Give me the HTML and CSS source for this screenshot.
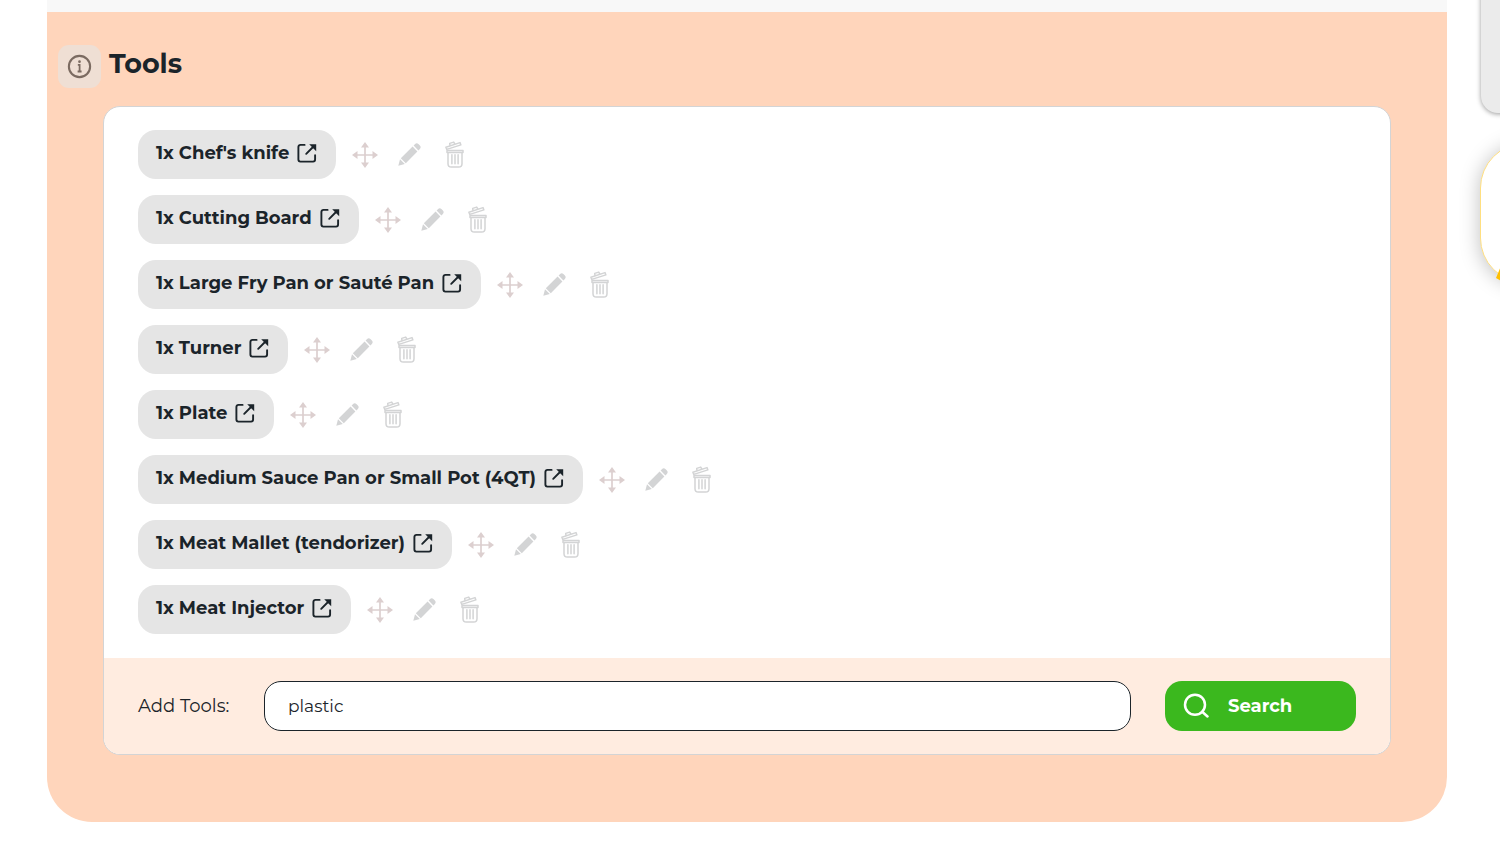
FILE: index.html
```html
<!DOCTYPE html>
<html lang="en">
<head>
  <meta charset="UTF-8">
  <meta name="viewport" content="width=device-width, initial-scale=1.0">
  <link rel="stylesheet" href="styles.css">
  <title>Tools</title>
</head>
<body>

  <!-- shared icons -->
  <svg class="icon-defs" aria-hidden="true">
    <symbol id="icon-open" viewBox="0 0 20 20">
      <path d="M7.6 1.9H3.4a2 2 0 0 0-2 2v12.7a2 2 0 0 0 2 2h12.7a2 2 0 0 0 2-2v-4.4M16.5 3.5L9.2 10.8" fill="none" stroke="#1b242a" stroke-width="1.9" stroke-linecap="round" stroke-linejoin="round"/>
      <path d="M12.2 1.2h7v7l-2-2L14.2 3.2z" fill="#1b242a"/>
    </symbol>
    <symbol id="icon-move" viewBox="0 0 26 26">
      <path d="M13 4v18M4 13h18" stroke="#dccfcf" stroke-width="1.7"/>
      <path d="M13 0l4 5.5H9zM13 26l4-5.5H9zM0 13l5.5-4v8zM26 13l-5.5-4v8z" fill="#dccfcf"/>
    </symbol>
    <symbol id="icon-edit" viewBox="0 0 23 23">
      <path d="M0.3 22.7L2 16.2L6.8 21zM2.8 15.2L14.6 3.6L19.4 8.4L7.8 20.2zM15.6 2.6l1.5-1.5q1.6-1.5 3.3 0l1.5 1.5q1.5 1.7 0 3.3l-1.5 1.5z" fill="#d3d4d5"/>
    </symbol>
    <symbol id="icon-trash" viewBox="0 0 19 27">
      <g fill="none" stroke="#d3d4d5" stroke-width="1.5" stroke-linejoin="round" stroke-linecap="round">
        <path d="M0.9 6.2L15 1.6L15.9 3.9L1.8 8.4zM5 4.6L4.7 2.4L8.7 1.1L9.8 3"/>
        <path d="M2 9.4h16v2.2H2zM3 11.7v11q0 3.3 3.3 3.3h7.4q3.3 0 3.3-3.3v-11M6.9 13.8v9M10 13.8v9M13.1 13.8v9"/>
      </g>
    </symbol>
  </svg>

  <div class="top-strip"></div>

  <section class="tools">
    <div class="tools-header">
      <button class="info-btn" type="button" aria-label="Info">
        <svg width="25" height="25" viewBox="0 0 24 24">
          <circle cx="12" cy="12" r="10.2" fill="none" stroke="#7b6b61" stroke-width="2"/>
          <path d="M10.4 10.4h1.7v6.2M10.2 16.8h3.8" fill="none" stroke="#7b6b61" stroke-width="1.7"/>
          <circle cx="12" cy="7.4" r="1.3" fill="#7b6b61"/>
        </svg>
      </button>
      <h2>Tools</h2>
    </div>

    <div class="panel">
      <ul class="tool-list">
        <li>
          <a class="pill" href="#">1x Chef's knife <svg width="20" height="20"><use href="#icon-open"/></svg></a>
          <button class="action" type="button" aria-label="Move"><svg width="26" height="26"><use href="#icon-move"/></svg></button>
          <button class="action" type="button" aria-label="Edit"><svg width="23" height="23"><use href="#icon-edit"/></svg></button>
          <button class="action" type="button" aria-label="Delete"><svg width="19" height="27"><use href="#icon-trash"/></svg></button>
        </li>
        <li>
          <a class="pill" href="#">1x Cutting Board <svg width="20" height="20"><use href="#icon-open"/></svg></a>
          <button class="action" type="button" aria-label="Move"><svg width="26" height="26"><use href="#icon-move"/></svg></button>
          <button class="action" type="button" aria-label="Edit"><svg width="23" height="23"><use href="#icon-edit"/></svg></button>
          <button class="action" type="button" aria-label="Delete"><svg width="19" height="27"><use href="#icon-trash"/></svg></button>
        </li>
        <li>
          <a class="pill" href="#">1x Large Fry Pan or Sauté Pan <svg width="20" height="20"><use href="#icon-open"/></svg></a>
          <button class="action" type="button" aria-label="Move"><svg width="26" height="26"><use href="#icon-move"/></svg></button>
          <button class="action" type="button" aria-label="Edit"><svg width="23" height="23"><use href="#icon-edit"/></svg></button>
          <button class="action" type="button" aria-label="Delete"><svg width="19" height="27"><use href="#icon-trash"/></svg></button>
        </li>
        <li>
          <a class="pill" href="#">1x Turner <svg width="20" height="20"><use href="#icon-open"/></svg></a>
          <button class="action" type="button" aria-label="Move"><svg width="26" height="26"><use href="#icon-move"/></svg></button>
          <button class="action" type="button" aria-label="Edit"><svg width="23" height="23"><use href="#icon-edit"/></svg></button>
          <button class="action" type="button" aria-label="Delete"><svg width="19" height="27"><use href="#icon-trash"/></svg></button>
        </li>
        <li>
          <a class="pill" href="#">1x Plate <svg width="20" height="20"><use href="#icon-open"/></svg></a>
          <button class="action" type="button" aria-label="Move"><svg width="26" height="26"><use href="#icon-move"/></svg></button>
          <button class="action" type="button" aria-label="Edit"><svg width="23" height="23"><use href="#icon-edit"/></svg></button>
          <button class="action" type="button" aria-label="Delete"><svg width="19" height="27"><use href="#icon-trash"/></svg></button>
        </li>
        <li>
          <a class="pill" href="#">1x Medium Sauce Pan or Small Pot (4QT) <svg width="20" height="20"><use href="#icon-open"/></svg></a>
          <button class="action" type="button" aria-label="Move"><svg width="26" height="26"><use href="#icon-move"/></svg></button>
          <button class="action" type="button" aria-label="Edit"><svg width="23" height="23"><use href="#icon-edit"/></svg></button>
          <button class="action" type="button" aria-label="Delete"><svg width="19" height="27"><use href="#icon-trash"/></svg></button>
        </li>
        <li>
          <a class="pill" href="#">1x Meat Mallet (tendorizer) <svg width="20" height="20"><use href="#icon-open"/></svg></a>
          <button class="action" type="button" aria-label="Move"><svg width="26" height="26"><use href="#icon-move"/></svg></button>
          <button class="action" type="button" aria-label="Edit"><svg width="23" height="23"><use href="#icon-edit"/></svg></button>
          <button class="action" type="button" aria-label="Delete"><svg width="19" height="27"><use href="#icon-trash"/></svg></button>
        </li>
        <li>
          <a class="pill" href="#">1x Meat Injector <svg width="20" height="20"><use href="#icon-open"/></svg></a>
          <button class="action" type="button" aria-label="Move"><svg width="26" height="26"><use href="#icon-move"/></svg></button>
          <button class="action" type="button" aria-label="Edit"><svg width="23" height="23"><use href="#icon-edit"/></svg></button>
          <button class="action" type="button" aria-label="Delete"><svg width="19" height="27"><use href="#icon-trash"/></svg></button>
        </li>
      </ul>

      <form class="add-bar">
        <label for="add-tools">Add Tools:</label>
        <input type="text" id="add-tools" value="plastic">
        <button class="search-btn" type="button">
          <svg width="26" height="26" viewBox="0 0 26 26" fill="none" stroke="#fff" stroke-width="2.5" stroke-linecap="round">
            <circle cx="12" cy="11.7" r="10"/>
            <path d="M19.2 18.8l5.3 4.7"/>
          </svg>
          Search
        </button>
      </form>
    </div>
  </section>

  <!-- widgets hanging over the right edge -->
  <div class="side-tab"></div>
  <div class="side-badge">
    <svg width="150" height="150" viewBox="0 0 150 150">
      <path d="M15 134L20 122L32 140L22 138z" fill="#ffbf00"/>
    </svg>
  </div>

</body>
</html>
```

FILE: styles.css
```css
* {
  box-sizing: border-box;
}

body {
  margin: 0 53px 0 47px;
  background-color: #fff;
  color: #1b242a;
  font-family: Montserrat, Inter, sans-serif;
  font-size: 18px;
  overflow-x: hidden;
}

button {
  border: none;
  padding: 0;
  background: none;
  font-family: inherit;
  cursor: pointer;
}

svg {
  display: block;
  flex: none;
}

.icon-defs {
  display: none;
}

.top-strip {
  height: 12px;
  background-color: #f8f8f8;
}

.tools {
  padding: 33px 56px 67px;
  background-color: #ffd5bb;
  border-radius: 0 0 45px 45px;
}

.tools-header {
  display: flex;
  gap: 8px;
  margin: 0 0 18px -45px;
}

.info-btn {
  display: flex;
  align-items: center;
  justify-content: center;
  width: 43px;
  height: 43px;
  background-color: #efdfd4;
  border-radius: 11px;
}

h2 {
  margin: 0;
  font-size: 27px;
  font-weight: 700;
  line-height: 37px;
}

.panel {
  background-color: #fff;
  border: 1px solid #d3d4d5;
  border-radius: 17px;
  overflow: hidden;
}

.tool-list {
  display: flex;
  flex-direction: column;
  gap: 16px;
  margin: 0;
  padding: 23px 34px 24px;
  list-style: none;
}

.tool-list li {
  display: flex;
  align-items: center;
}

.pill {
  display: flex;
  align-items: center;
  gap: 8px;
  height: 49px;
  margin-right: 16px;
  padding: 0 19px 3px 18px;
  background-color: #e5e5e5;
  border-radius: 18px;
  color: #1b242a;
  font-weight: 700;
  text-decoration: none;
}

.action {
  margin-right: 22px;
}

.action:nth-child(2) {
  margin-right: 20px;
}

.action:nth-child(3) {
  margin-right: 24px;
}

.add-bar {
  display: flex;
  align-items: center;
  gap: 34px;
  padding: 23px 34px;
  background-color: #ffece0;
}

.add-bar label {
  width: 92px;
  white-space: nowrap;
}

.add-bar input {
  flex: 1;
  min-width: 0;
  height: 50px;
  padding: 0 23px;
  background-color: #fff;
  border: 1px solid #1b242a;
  border-radius: 17px;
  color: #1b242a;
  font-family: inherit;
  font-size: 17px;
}

.search-btn {
  display: flex;
  align-items: center;
  gap: 19px;
  width: 191px;
  height: 50px;
  padding: 0 18px;
  background-color: #3bb81e;
  border-radius: 17px;
  color: #fff;
  font-size: 18px;
  font-weight: 700;
}

.side-tab {
  position: fixed;
  top: -60px;
  right: -61px;
  width: 80px;
  height: 173px;
  background-color: #ebebeb;
  border-radius: 17px;
  box-shadow: 0 1px 5px rgba(0, 0, 0, 0.4);
}

.side-badge {
  position: fixed;
  top: 143px;
  right: -130px;
  width: 150px;
  height: 140px;
  background-color: #fff;
  border: 1px solid #ffdf80;
  border-radius: 45px;
  box-shadow: 0 2px 20px rgba(0, 0, 0, 0.25);
}
```
